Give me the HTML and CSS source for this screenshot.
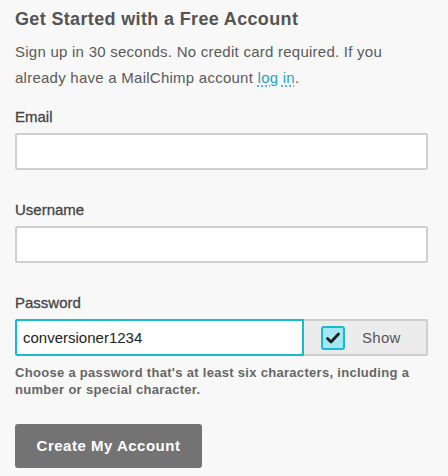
FILE: index.html
```html
<!DOCTYPE html>
<html>
<head>
<meta charset="utf-8">
<link rel="stylesheet" href="styles.css">
</head>
<body>
<form class="signup">
  <h1 class="title">Get Started with a Free Account</h1>
  <p class="intro">Sign up in 30 seconds. No credit card required. If you already have a MailChimp account <a class="login" href="#">log in</a>.</p>

  <label class="label label-first">Email</label>
  <div class="field"></div>

  <label class="label">Username</label>
  <div class="field"></div>

  <label class="label">Password</label>
  <div class="pw-row">
    <div class="pw-input">conversioner1234</div>
    <div class="show">
      <span class="check">
        <svg width="16" height="14" viewBox="0 0 16 14"><path d="M2.5 7.5 L6 11 L13.5 3" fill="none" stroke="#1e1e1e" stroke-width="2.8" stroke-linecap="round" stroke-linejoin="round"/></svg>
      </span>
      <span class="show-text">Show</span>
    </div>
  </div>
  <p class="hint">Choose a password that's at least six characters, including a number or special character.</p>

  <div class="btn">Create My Account</div>
</form>
</body>
</html>
```

FILE: styles.css
```css
html, body {
  margin: 0;
  padding: 0;
  background: #f8f8f8;
}
body {
  font-family: "Liberation Sans", Arial, Helvetica, sans-serif;
  color: #555;
}
.signup {
  display: flex;
  flex-direction: column;
  align-items: flex-start;
  padding: 7px 20px 0 15px;
  width: 413px;
}
.title {
  margin: 0;
  font-size: 18px;
  line-height: 24px;
  font-weight: bold;
  letter-spacing: 0.35px;
  color: #545454;
}
.intro {
  margin: 8px 0 0;
  max-width: 400px;
  font-size: 15px;
  line-height: 26px;
  letter-spacing: 0.25px;
  color: #5a5a5a;
}
.login {
  color: #1fa4c0;
  text-decoration: underline dotted #1fa4c0;
  text-underline-offset: 3px;
}
.label {
  display: block;
  font-size: 15px;
  line-height: 20px;
  color: #444;
  margin-top: 30px;
  -webkit-text-stroke: 0.3px #444;
}
.label-first {
  margin-top: 16px;
}
.field {
  margin-top: 6px;
  width: 413px;
  height: 37px;
  box-sizing: border-box;
  background: #fff;
  border: 2px solid #cfcfcf;
  border-radius: 2px;
}
.pw-row {
  margin-top: 6px;
  display: flex;
  width: 413px;
  height: 37px;
}
.pw-input {
  box-sizing: border-box;
  width: 289px;
  height: 37px;
  background: #fff;
  border: 2px solid #15bcd1;
  border-radius: 2px 0 0 2px;
  font-size: 15px;
  line-height: 33px;
  padding-left: 6px;
  color: #222;
}
.show {
  box-sizing: border-box;
  flex: 1;
  height: 37px;
  display: flex;
  align-items: center;
  background: #ececec;
  border: 2px solid #cfcfcf;
  border-left: none;
  border-radius: 0 2px 2px 0;
  padding-left: 17px;
}
.check {
  box-sizing: border-box;
  width: 24px;
  height: 24px;
  display: flex;
  align-items: center;
  justify-content: center;
  background: #a4e6f2;
  border: 2px solid #15bcd1;
  border-radius: 3px;
}
.show-text {
  margin-left: 17px;
  font-size: 15px;
  letter-spacing: 0.3px;
  color: #555;
}
.hint {
  margin: 8px 0 0;
  font-size: 13px;
  line-height: 17px;
  font-weight: bold;
  letter-spacing: 0.3px;
  color: #666;
}
.btn {
  margin-top: 26px;
  width: 187px;
  height: 44px;
  box-sizing: border-box;
  background: #737373;
  border-radius: 3px;
  color: #fff;
  font-size: 15px;
  font-weight: bold;
  letter-spacing: 0.5px;
  line-height: 44px;
  text-align: center;
}
```
